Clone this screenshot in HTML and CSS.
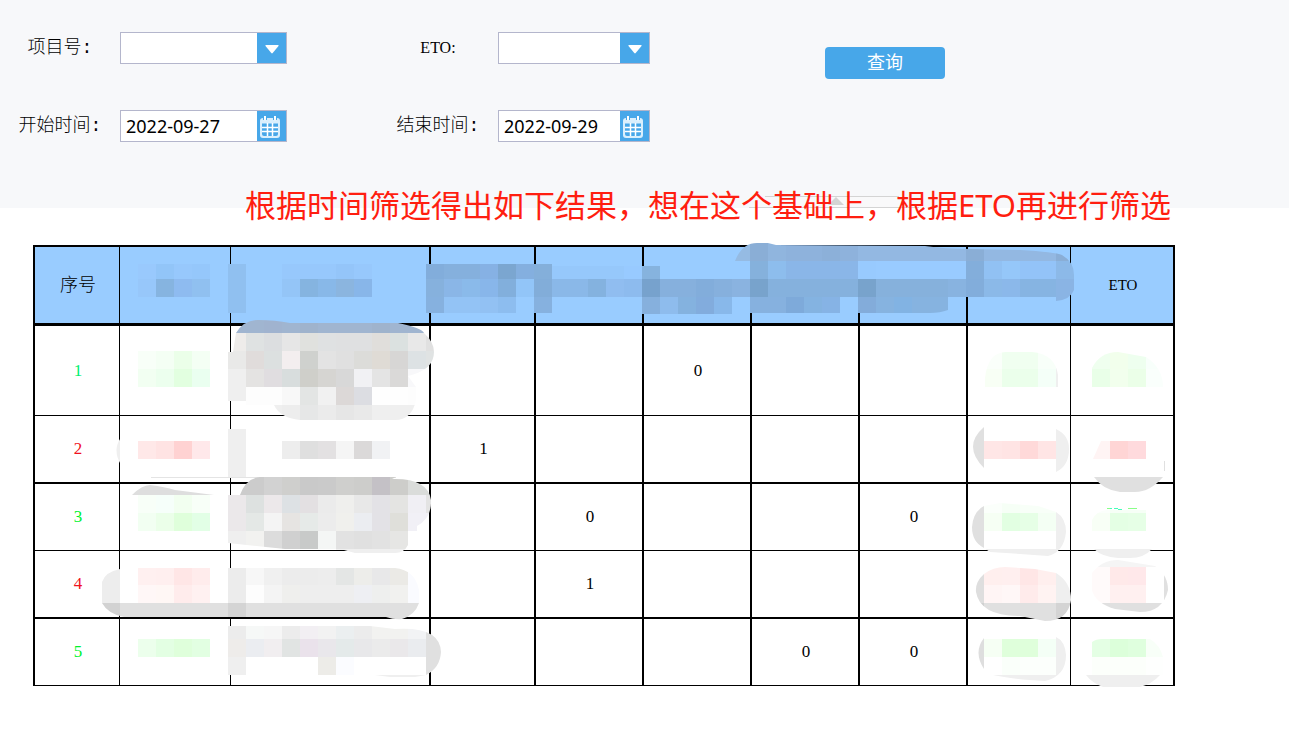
FILE: index.html
```html
<!DOCTYPE html>
<html lang="zh-CN">
<head>
<meta charset="utf-8">
<title>查询</title>
<link rel="stylesheet" href="styles.css">
</head>
<body>
<form class="filters">
  <label class="label" for="project">项目号:</label>
  <div class="field">
    <select id="project" class="control"><option></option></select>
    <span class="cap cap-arrow"><svg width="14" height="9" viewBox="0 0 14 9"><path d="M1 0h12q1 0 .5 1L7.700 8q-.7.800-1.400 0L.5 1Q0 0 1 0Z" fill="#fff"/></svg></span>
  </div>
  <label class="label latin" for="eto">ETO:</label>
  <div class="field">
    <select id="eto" class="control"><option></option></select>
    <span class="cap cap-arrow"><svg width="14" height="9" viewBox="0 0 14 9"><path d="M1 0h12q1 0 .5 1L7.700 8q-.7.800-1.400 0L.5 1Q0 0 1 0Z" fill="#fff"/></svg></span>
  </div>
  <button class="query" type="submit">查询</button>
  <label class="label" for="start">开始时间:</label>
  <div class="field">
    <input id="start" class="control" type="text" value="2022-09-27">
    <button class="cap" type="button" aria-label="开始时间">
      <svg width="22" height="22" viewBox="0 0 22 22"><rect x="1" y="2" width="20" height="20" rx="3" fill="#d9effd"/><path d="M3 7.500h16v10.500q0 2-2 2H5q-2 0-2-2Z" fill="#47a7e9"/><path d="M3 11.500h16M3 15.500h16M8.500 7v13M13.500 7v13" stroke="#fff" stroke-width="1.500"/><path d="M6 0v4M16 0v4" stroke="#47a7e9" stroke-width="4"/><path d="M6 .5v3M16 .5v3" stroke="#fff" stroke-width="2" stroke-linecap="round"/></svg>
    </button>
  </div>
  <label class="label" for="end">结束时间:</label>
  <div class="field">
    <input id="end" class="control" type="text" value="2022-09-29">
    <button class="cap" type="button" aria-label="结束时间">
      <svg width="22" height="22" viewBox="0 0 22 22"><rect x="1" y="2" width="20" height="20" rx="3" fill="#d9effd"/><path d="M3 7.500h16v10.500q0 2-2 2H5q-2 0-2-2Z" fill="#47a7e9"/><path d="M3 11.500h16M3 15.500h16M8.500 7v13M13.500 7v13" stroke="#fff" stroke-width="1.500"/><path d="M6 0v4M16 0v4" stroke="#47a7e9" stroke-width="4"/><path d="M6 .5v3M16 .5v3" stroke="#fff" stroke-width="2" stroke-linecap="round"/></svg>
    </button>
  </div>
  <svg class="handle" width="180" height="12" viewBox="0 0 180 12"><path d="M16 .5h134l20 11H0Z" fill="#f9f9fa"/><path d="M16 .5h134M0 11.500h170" stroke="#d4d4d4"/><path d="M87 1l8 8H79Z" fill="#d4d4d4"/></svg>
</form>
<p class="note">根据时间筛选得出如下结果，想在这个基础上，根据ETO再进行筛选</p>
<main class="report">
  <div class="sheet">
    <table>
      <colgroup><col class="w85"><col class="w111"><col class="w200"><col class="w105"><col class="w108"><col class="w108"><col class="w108"><col class="w108"><col class="w103"><col class="w104"></colgroup>
      <thead><tr><th>序号</th><th></th><th></th><th></th><th></th><th></th><th></th><th></th><th></th><th class="latin">ETO</th></tr></thead>
      <tbody>
        <tr class="tall green"><td>1</td><td></td><td></td><td></td><td></td><td>0</td><td></td><td></td><td></td><td></td></tr>
        <tr class="thick red"><td>2</td><td></td><td></td><td>1</td><td></td><td></td><td></td><td></td><td></td><td></td></tr>
        <tr class="green"><td>3</td><td></td><td></td><td></td><td>0</td><td></td><td></td><td>0</td><td></td><td></td></tr>
        <tr class="thick red"><td>4</td><td></td><td></td><td></td><td>1</td><td></td><td></td><td></td><td></td><td></td></tr>
        <tr class="green"><td>5</td><td></td><td></td><td></td><td></td><td></td><td>0</td><td>0</td><td></td><td></td></tr>
      </tbody>
    </table>
    <svg class="mosaic" viewBox="33 245 1142 441" preserveAspectRatio="none" aria-hidden="true"></svg>
  </div>
</main>
<script src="mosaic.js"></script>
</body>
</html>
```
FILE: styles.css
```css
* { box-sizing: border-box; }

body {
  margin: 0;
  background: #fff;
  color: #000;
  font: 18px/24px "Liberation Serif", "Noto Sans CJK SC", serif;
}

.filters {
  position: relative;
  display: grid;
  grid-template-columns: 120px 167px 91px 120px 152px 175px 120px;
  grid-template-rows: 32px 32px;
  row-gap: 46px;
  min-height: 208px;
  padding-top: 32px;
  background: #f7f8fa;
}

.label {
  grid-column: 1;
  align-self: center;
  font-family: "Liberation Mono", "Noto Sans CJK SC", monospace;
  font-weight: 300;
  text-align: center;
}

.label:nth-of-type(even) { grid-column: 4; }
.label.latin { font-family: "Liberation Serif", serif; }
.latin { font-size: 16px; font-weight: 400; }

.field {
  position: relative;
  display: flex;
  border: 1px solid #b4b6cc;
  background: #fff;
}

.control {
  flex: 1;
  min-width: 0;
  padding: 0 5px;
  border: 0;
  outline: 0;
  border-radius: 0;
  appearance: none;
  background: transparent;
  color: #000;
  font: 18px/30px "Noto Sans", sans-serif;
}

.cap {
  display: flex;
  align-items: center;
  justify-content: center;
  flex: 0 0 29px;
  padding: 2px 3px 0 0;
  border: 0;
  background: #47a7e9;
}

.cap-arrow { padding: 3px 0 0; pointer-events: none; }

.query {
  grid-column: 7;
  grid-row: 1;
  height: 32px;
  margin-top: 15px;
  padding: 0 0 4px;
  border: 0;
  border-radius: 4px;
  background: #47a7e9;
  color: #fff;
  font: 18px/28px "Noto Sans CJK SC", sans-serif;
}

.handle {
  position: absolute;
  bottom: 0;
  left: 749px;
}

.note {
  position: absolute;
  top: 183px;
  left: 245px;
  margin: 0;
  color: #ff1e10;
  font: 31px/44px "Noto Sans", "Noto Sans CJK SC", sans-serif;
  white-space: nowrap;
}

.report { padding: 37px 114px 46px 33px; }
.sheet { position: relative; }

table {
  width: 100%;
  table-layout: fixed;
  border-collapse: separate;
  border-spacing: 0;
  border: solid #000;
  border-width: 2px 0 0 2px;
}

.w85 { width: 85px; }
.w111 { width: 111px; }
.w200 { width: 200px; }
.w105 { width: 105px; }
.w108 { width: 108px; }
.w103 { width: 103px; }
.w104 { width: 104px; }

th, td {
  height: 67px;
  padding: 0 0 0 2px;
  border: solid #000;
  border-width: 0 2px 1px 0;
  text-align: center;
  vertical-align: middle;
}

td { font-size: 17px; }

th {
  height: 79px;
  border-bottom-width: 3px;
  background: #9cf;
  font-weight: 300;
}

th.latin { font-size: 15px; font-weight: 400; }

th:nth-child(-n+2), td:nth-child(-n+2),
th:nth-child(9), td:nth-child(9) { border-right-width: 1px; }

.tall td { height: 90px; }
.thick td { height: 68px; border-bottom-width: 2px; }
.green td:first-child { color: #00f22c; }
.tall td:first-child { color: #00f070; }
.red td:first-child { color: #f01020; }

.mosaic {
  position: absolute;
  inset: 0;
  width: 100%;
  height: 100%;
  overflow: visible;
  pointer-events: none;
}
```
FILE: mosaic.js
```javascript
// Each patch: optional outline, then strips [x, y, height, colours of 18-wide cells]; "-" skips a cell.
const patches = [
  { strips: [
    [138, 264, 15, "99c9fd 92c5f8 97c8fc 95c7fb"], [138, 279, 18, "97c7fa 86b4e0 8ebbf0 90c0f0"],
    [228, 264, 49, "90c0f0"],
    [282, 264, 15, "97c8fc 97c8fc 97c8fc 94c5f9 97c8fc"], [282, 279, 18, "94c5f7 85b4e0 88b8e8 8bb5df 88b6e9"],
    [426, 264, 15, "82addb 85b0dd 85b0dd 86b1e4 7ba6d0 84afdf 84afda"],
    [426, 279, 18, "86b1dd 8ab6e7 8abaea 88b6ea 82afdc 92c5f8 82add9"],
    [426, 297, 16, "86b1df 93c3f5 93c3f5 92c1f3 8dbdef - 86b1df"],
    [552, 266, 13, "96c8fb 96c8fb 96c8fb 96c8fb 98caff 86b3de"],
    [552, 279, 18, "8ab8e8 8ab8e8 84b2df 90bdf0 8dbbee 77a2cd 86b0dd 86b0dd 82addb 86b0dd 8ab3e0"],
    [642, 297, 17, "86b0dd 8ebced 84b2df 82acdd 88b8ea"]
  ] },
  { d: "M735 261Q742 243 757 243H768L776 245 925 246Q945 249 970 249L1020 250Q1055 252 1062 255Q1074 262 1074 275V290Q1070 300 1056 301V297H948V310Q940 313 930 313H735Z", strips: [
    [732, 243, 18, "95bbe3 8aaed6 90b5de 8eb2dc 8eb2dc 8cb0d9 8eb2dc 93b8e2 93b8e2 93b8e2 93b8e2 93b8e2 93b8e2 8aaed6 93b8e2 93b8e2 93b8e2 93b8e2 8aaed6"],
    [750, 261, 18, "85b1dc 8dbded 8ab6e8 8ab6e8 8ab6e8 8ab6e8 98cafe 99cbff 99cbff 99cbff 99cbff 99cbff 83aedb 91c1f3 95c7f9 93c3f8 93c3f8 8cb9e8"],
    [750, 279, 18, "78a3cc 85b1dd 85b1dd 85b1dd 85b1dd 85b1dd 78a3cc 86b1dc 86b1dc 86b1dc 86b1dc 88b3e0 82addb 8bb9e8 8bb8ea 86b4e2 86b4e2 8ab4e4"],
    [750, 297, 17, "86b1df 86b1df 7eaada 84b3e1 86b3e5 - 83acda 86b3e0 82b3e3 86b3e0 86b3e0"],
    [1056, 297, 5, "8ab4e4"]
  ] },
  { strips: [[138, 351, 18, "f8fff8 f4fff4 ebffe9 f4fff4"], [138, 369, 18, "f2fff2 ecffee e2ffe0 eafff0"]] },
  { d: "M236 333Q244 320 258 320Q275 320 290 323H398Q422 328 424 333Q434 342 434 352Q434 370 408 376L416 387V400Q412 420 395 420H300Q280 418 274 405H246V401H228V352H233Z", strips: [
    [228, 320, 13, "a0b5d0 a0b5d0 a0b3cf a0b5d0 9fb3cc a0b5d0 a0b5d0 a0b5d0 9fb3cc a0b5d0 a0b5d0"],
    [228, 333, 18, "eeecea dfe2e2 dcdee0 e6e6e6 e0e1de dfe1e2 dfe0e1 dfe0e1 e0dedb dbe1e0 e8e8e8 e0e0e0"],
    [228, 351, 18, "e9e9e8 e0dcdb dce0e0 f3eeef cfd1ce e3e3e3 e0e0e0 dcdcd9 dfdbd5 d7d6d5 dde2e4 e0e3e3"],
    [228, 369, 18, "efefef e4e3e2 e0dde0 d8dddd cfcfca d6d5d2 d8d8d8 f1f1f4 e4e4e4 dad9d8 f8f8fa f4f4f7"],
    [228, 387, 18, "efefef fdfdfd fdfdfd f8f8f8 e3e5e4 f1f1f1 dcd8d7 dcdde2 fefefe fefefe fdfdfd"],
    [264, 405, 15, "efefef ededed e6e7e7 ebebeb e6e6e6 e9e9e9 efefef efefef efefef"]
  ] },
  { strips: [
    [138, 441, 18, "ffe8e8 ffe3e3 ffd2d2 ffe8ea"], [228, 429, 48, "efefef"],
    [282, 441, 18, "ededed dfdfdf e3e1e2 f5f5f5 dbd9d9 f1f2f4"],
    [138, 495, 18, "f8fff8 f6fffa f2fff0 f8fff8"], [138, 513, 18, "f2fff2 ebffe9 dfffdb e2ffe6"]
  ] },
  { d: "M120 439Q113 450 120 463Z", strips: [[102, 435, 30, "efefef"]] },
  { d: "M151 477H396V478H151Z", strips: [[138, 477, 1, "e4e4e4 ".repeat(15).trim()]] },
  { d: "M132 495Q142 485 150 485Q165 487 175 490L214 495Z", strips: [[120, 480, 15, "dedede dedede dedede dedede dedede dedede"]] },
  { d: "M240 495Q246 478 260 477H396L392 479Q428 478 431 500Q432 518 417 526V531H408V545Q404 553 395 553H355L344 550 285 549 228 543V495Z", strips: [
    [228, 477, 18, "cccccc cccccc d2d2d2 cfcfcd c9c9c9 cacaca cfcfcd cdcdcb c4c1c6 cdcdca dadcda dadcda"],
    [228, 495, 18, "ebe8ea dde1e0 ece8ea dde1e4 e3e0e2 ebebeb efefed e8e8e8 e3e2e6 e4e4e2 f0eff4 e3e3e3"],
    [228, 513, 18, "ebe8ea e4e8e6 f4f4f4 e6e4e2 e6eae8 ececec f0f0ed ebedf1 e3e2e6 dfdfda f1f0f6 f1f0f6"],
    [228, 531, 18, "efefef f2f2f0 dcdcdc d0d0d0 c8cac9 f4f6f5 e2e2e2 e0e0e0 e2e2e2 e6e6e4"],
    [336, 549, 4, "efefef efefef efefef efefef"]
  ] },
  { d: "M102 582Q105 572 120 569V568H395Q415 570 419 590L419 603Q415 615 402 619Q395 620 386 617H124Q108 614 102 603Z", strips: [
    [102, 568, 35, "ededed"],
    [138, 568, 17, "fff0f0 ffefef ffe6e6 ffecec"], [138, 585, 18, "fff7f7 fff7f5 ffecec fff1f1"],
    [228, 568, 17, "ececec f7f7f7 f0f0f0 ececec ececec ededed e4e6e5 ededea e8e8e9 ebeae6 fafbff"],
    [228, 585, 18, "ececec fdfdfd f4f4f4 efefed eeeeee eeeeee eeeeee eeeff3 eeefee f1f1ef fafbff"],
    [102, 603, 17, "d2d2d2 e0e0e0 e0e0e0 e0e0e0 e0e0e0 e0e0e0 e0e0e0 d4d4d4 e0e0e0 e0e0e0 e0e0e0 e0e0e0 e0e0e0 e0e0e0 e0e0e0 e0e0e0 e0e0e0 e0e0e0"]
  ] },
  { strips: [[138, 639, 18, "ecffec e3ffe3 dfffdb e2ffe2"]] },
  { d: "M228 626H370L395 629Q440 626 441 652Q440 668 426 675L415 677H390L375 675H228Z", strips: [
    [228, 626, 13, "ececec f6f8f7 f6f6f6 ececec f2eff3 f2f2f2 ebeff0 ececec f2f2f0 f2f2f0 f2f3f5 e0e0e0"],
    [228, 639, 18, "eeecea ebedf1 f1eef0 e1e4e3 eae2eb e9e7eb e4eaea e8e8ea ebebeb eae8ea eaecef e0e0e0"],
    [228, 657, 18, "efefef ffffff ffffff ffffff ffffff edece8 fbfcff ffffff ffffff ffffff ffffff e0e0e0"],
    [372, 675, 2, "efefef efefef efefef"]
  ] },
  { d: "M985 387V378Q988 352 1006 352H1032Q1055 354 1058 375V387Z", strips: [
    [984, 351, 18, "fafffa f0fff0 f0fff0 f8fff9 efefef"], [984, 369, 18, "f8fff5 ebffeb ebffeb f4fff8 efefef"]
  ] },
  { d: "M1092 387V368Q1100 352 1118 352L1146 357Q1163 368 1163 387Z", strips: [
    [1092, 351, 18, "efffef f2ffec eeffef f8fffb"], [1092, 369, 18, "e9ffe8 f2ffed ebffe8 fafffc"]
  ] },
  { d: "M984 427Q962 446 984 468H1056V472Q1069 466 1069 449Q1069 435 1056 429Z", strips: [
    [966, 427, 45, "e0e0e0"], [984, 441, 18, "ffe6e6 ffe4e4 ffd9d9 ffe5e5"], [1056, 427, 45, "efefef"]
  ] },
  { d: "M1093 459L1101 441H1146V459Z", strips: [[1092, 441, 18, "fff4f4 ffd5d5 ffdadd"]] },
  { d: "M1094 477H1163Q1150 492 1135 492H1120Q1103 490 1094 477Z", strips: [[1092, 477, 15, "e0e0e0 e0e0e0 e0e0e0 e0e0e0"]] },
  { d: "M1164 461V471H1165V461Z", strips: [[1164, 461, 10, "e0e0e0"]] },
  { d: "M984 506L1000 503 1038 506 1056 512Q1066 518 1066 532Q1064 552 1048 556L1020 554 990 552 984 548Q972 542 972 527Q973 512 984 506Z", strips: [
    [966, 503, 45, "e0e0e0"], [984, 503, 10, "fbfffb f6fff6 f8fff8 f8fff8"],
    [984, 513, 18, "f6fff4 e2ffe2 e6ffe6 f4fff4"], [1056, 503, 54, "efefef"],
    [984, 549, 8, "efefef efefef efefef efefef"]
  ] },
  { d: "M1092 531V520Q1096 511 1107 510H1146V531Z", strips: [[1092, 510, 3, "fbfffb f6fff6 f6fff6"], [1092, 513, 18, "f8fff6 e4ffe4 e6ffe6"]] },
  { d: "M1107 508h5v1h-5zM1114 508h4v1h-4zM1118 509h4v1h-4zM1128 508h9v1h-9z", strips: [[1092, 507, 4, "88ff88 44ffbb 88ff88"]] },
  { d: "M1094 549H1152Q1144 558 1130 558H1118Q1102 557 1094 549Z", strips: [[1092, 549, 9, "efefef efefef efefef efefef"]] },
  { d: "M984 574Q993 567 1005 567L1035 569 1056 573Q1071 582 1071 600Q1068 621 1045 621L1020 616Q980 616 976 592Q975 582 984 574Z", strips: [
    [966, 567, 18, "dedede ffefee ffefef ffe6e6 ffefee efefef"], [966, 585, 18, "dedede fff5f5 fff7f7 ffebeb fff3f2 efefef"],
    [966, 603, 18, "d0d0d0 e0e0e0 e0e0e0 e0e0e0 e0e0e0 d4d4d4"]
  ] },
  { d: "M1092 573Q1102 560 1118 560L1155 566Q1168 575 1168 590Q1163 612 1140 612L1115 609Q1095 603 1092 590Z", strips: [
    [1092, 560, 7, "f5f5f5 f5f5f5 f5f5f5 f5f5f5"], [1092, 567, 18, "fffafa ffe9e9 ffe8ea - e0e0e0"],
    [1092, 585, 18, "fffafa fff0f0 fff0f0 - e0e0e0"], [1092, 603, 9, "e0e0e0 e0e0e0 e0e0e0 e0e0e0"]
  ] },
  { d: "M984 638Q973 652 984 669L993 675Q1010 679 1045 681Q1066 676 1066 655Q1065 641 1056 637Z", strips: [
    [966, 637, 38, "dedede"], [984, 639, 18, "f6fff4 dfffdb dfffdb f4fff6"], [984, 657, 18, "ffffff fafffa fcfffc fcfffc"],
    [984, 675, 6, "efefef efefef efefef efefef"], [1056, 637, 44, "efefef"]
  ] },
  { d: "M1092 657V642Q1096 639 1102 639H1150Q1160 645 1163 657V675H1092Z", strips: [
    [1092, 639, 18, "e4ffe4 dcffda dfffde f8fff8"], [1092, 657, 18, "fcfffb fcfffb fcfffb fefffe"]
  ] },
  { d: "M1086 675H1160Q1152 684 1140 687H1103Q1092 683 1086 675Z", strips: [[1074, 675, 12, "efefef efefef efefef efefef efefef"]] }
];

const svg = document.querySelector(".mosaic");
svg.innerHTML = patches.map(({ d, strips }, i) => {
  const cells = strips.map(([x, y, h, colours]) => colours.split(" ").map((c, n) =>
    c === "-" ? "" : `<rect x="${x + n * 18}" y="${y}" width="18" height="${h}" fill="#${c}"/>`).join("")).join("");
  return d
    ? `<clipPath id="patch${i}"><path d="${d}"/></clipPath><g clip-path="url(#patch${i})" shape-rendering="crispEdges">${cells}</g>`
    : `<g shape-rendering="crispEdges">${cells}</g>`;
}).join("");
```
